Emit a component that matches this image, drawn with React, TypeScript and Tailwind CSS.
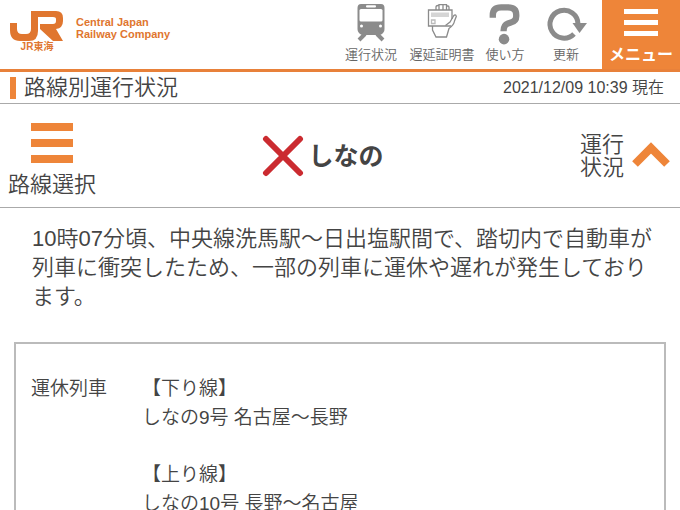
import { useState } from 'react'

const NAV_LABEL = 'text-[13px] leading-5 whitespace-nowrap'

const cancelled = [
  { direction: '【下り線】', trains: ['しなの9号 名古屋〜長野'] },
  { direction: '【上り線】', trains: ['しなの10号 長野〜名古屋'] },
]

function Logo() {
  return (
    <a href="#top" className="flex gap-3 pt-[11px] pl-[10px] text-[#e0762f]">
      <div className="flex flex-col items-center">
        <svg width="54" height="30" viewBox="0 0 54 30" fill="currentColor" aria-hidden="true">
          <path d="M0 12H7V18Q7 23 12 23H16Q21 23 21 18V0H46Q53 0 53 7V10Q53 17 46 18L53 30H43L30 18V13H43Q46 13 46 10V8Q46 6 43 6H28V20Q28 30 19 30H10Q0 30 0 19Z" />
        </svg>
        <span className="text-[10px] leading-3 font-bold">JR東海</span>
      </div>
      <div className="pt-[5px] text-[11px] leading-3 font-bold whitespace-nowrap">
        Central Japan
        <br />
        Railway Company
      </div>
    </a>
  )
}

function TrainIcon() {
  return (
    <svg width="30" height="38" viewBox="0 0 30 38" aria-hidden="true">
      <path fill="#8b8b8b" d="M5 0H25Q28.5 0 28.5 4V25Q28.5 29 24 31H6Q1.5 29 1.5 25V4Q1.5 0 5 0Z" />
      <path d="M9 30L3 36M21 30L27 36" stroke="#8b8b8b" strokeWidth="4" />
      <rect x="10" y="1.3" width="10" height="2.2" rx="1" fill="#fff" />
      <rect x="3.5" y="5" width="23" height="12.5" rx="1.5" fill="#fff" />
      <circle cx="5.5" cy="22" r="1.5" fill="#fff" />
      <circle cx="24.5" cy="22" r="1.5" fill="#fff" />
    </svg>
  )
}

function CertificateIcon() {
  return (
    <svg width="30" height="38" viewBox="0 0 30 38" fill="none" stroke="#8b8b8b" strokeWidth="1.3" aria-hidden="true">
      <path d="M9 6V3Q9 1.5 11 1.5H12V6M12 1.5V.7H16V6M16 .7H19.5V6M19.5 2H21Q22 2 22 3.5V6" />
      <path d="M24 22H1.5V6H25V15" />
      <path d="M4 8.5H22V13H4Z" fill="#d5d5d5" stroke="none" />
      <path d="M4.5 16H8V19.5H4.5Z" stroke="#bbb" />
      <path d="M5.5 22V26L9 33H19.5L22 24.5Q27 21 27.5 17L29.3 12.5Q28.5 9.5 26.5 12L23 18L18.5 21.5" />
    </svg>
  )
}

function QuestionIcon() {
  return (
    <svg width="32" height="42" viewBox="0 0 32 42" aria-hidden="true">
      <path
        d="M3.5 14V11.5Q3.5 3.5 12 3.5H19Q27.5 3.5 27.5 11V12.5Q27.5 17.5 22 19L19 20Q14.5 21.5 14.5 28"
        fill="none"
        stroke="#8b8b8b"
        strokeWidth="6.5"
      />
      <circle cx="15" cy="36" r="5.4" fill="#8b8b8b" />
    </svg>
  )
}

function ReloadIcon() {
  return (
    <svg width="42" height="38" viewBox="0 0 42 38" aria-hidden="true">
      <path d="M29 30A14 14 0 1 1 33 20" fill="none" stroke="#8b8b8b" strokeWidth="5" />
      <path d="M27.5 19H42L34.5 29Z" fill="#8b8b8b" />
    </svg>
  )
}

export default function App() {
  const [open, setOpen] = useState(true)

  return (
    <div
      id="top"
      lang="ja"
      className="min-h-screen bg-white font-['Liberation_Sans','Noto_Sans_CJK_JP',sans-serif] font-[350] text-[#444]"
    >
      <header className="flex h-[72px] justify-between border-b-3 border-[#e8813a]">
        <Logo />
        <nav className="flex text-[#666]">
          <a href="#status" className="flex w-[66px] flex-col items-center justify-between py-1">
            <TrainIcon />
            <span className={NAV_LABEL}>運行状況</span>
          </a>
          <a href="#certificate" className="flex w-[76px] flex-col items-center justify-between py-1">
            <CertificateIcon />
            <span className={NAV_LABEL}>遅延証明書</span>
          </a>
          <a href="#help" className="flex w-[50px] flex-col items-center justify-between py-1">
            <QuestionIcon />
            <span className={NAV_LABEL}>使い方</span>
          </a>
          <button type="button" className="flex w-[72px] flex-col items-center justify-between py-1">
            <ReloadIcon />
            <span className={NAV_LABEL}>更新</span>
          </button>
          <button
            type="button"
            className="flex w-[78px] flex-col items-center justify-between bg-[#ee8539] pt-[9px] pb-[2px] text-white"
          >
            <span className="flex flex-col gap-[6px]">
              <span className="h-[5px] w-[34px] bg-white" />
              <span className="h-[5px] w-[34px] bg-white" />
              <span className="h-[5px] w-[34px] bg-white" />
            </span>
            <span className="text-base leading-6 font-bold">メニュー</span>
          </button>
        </nav>
      </header>

      <div className="flex h-8 items-center justify-between border-b border-[#aaa] pr-4 pl-[10px]">
        <h1 className="flex items-center gap-2 text-[22px] leading-7">
          <span className="h-[22px] w-[6px] bg-[#ee8539]" />
          路線別運行状況
        </h1>
        <time dateTime="2021-12-09T10:39" className="text-base">
          2021/12/09 10:39 現在
        </time>
      </div>

      <section className="grid h-[104px] grid-cols-[1fr_auto_1fr] items-center border-b border-[#aaa] pr-[10px] pl-2">
        <button type="button" className="flex flex-col items-center gap-2 justify-self-start pt-[10px] text-[22px] leading-7">
          <span className="flex flex-col gap-2">
            <span className="h-2 w-[42px] bg-[#ee8539]" />
            <span className="h-2 w-[42px] bg-[#ee8539]" />
            <span className="h-2 w-[42px] bg-[#ee8539]" />
          </span>
          路線選択
        </button>
        <h2 className="mr-8 flex items-center gap-1 text-[25px] leading-9 font-bold">
          <svg width="42" height="42" viewBox="0 0 42 42" aria-hidden="true">
            <path d="M4 4L38 38M38 4L4 38" stroke="#cb2b30" strokeWidth="6" strokeLinecap="round" />
          </svg>
          しなの
        </h2>
        <button
          type="button"
          aria-expanded={open}
          onClick={() => setOpen(!open)}
          className="flex items-center gap-2 justify-self-end text-[22px] leading-[23px]"
        >
          <span>
            運行
            <br />
            状況
          </span>
          <svg width="38" height="28" viewBox="0 0 38 28" className={open ? '' : 'rotate-180'} aria-hidden="true">
            <path d="M3 22L19 6L35 22" fill="none" stroke="#ee8539" strokeWidth="8" />
          </svg>
        </button>
      </section>

      {open && (
        <main className="px-[14px] pt-4">
          <p className="pr-1 pl-[18px] text-[22px] leading-[29px]">
            10時07分頃、中央線洗馬駅〜日出塩駅間で、踏切内で自動車が列車に衝突したため、一部の列車に運休や遅れが発生しております。
          </p>
          <dl className="mt-[31px] flex gap-[35px] border-2 border-[#bbb] px-[15px] py-[30px] text-[19px] leading-[29px]">
            <dt>運休列車</dt>
            <dd className="flex flex-col gap-7">
              {cancelled.map((group) => (
                <div key={group.direction}>
                  <p>{group.direction}</p>
                  {group.trains.map((train) => (
                    <p key={train}>{train}</p>
                  ))}
                </div>
              ))}
            </dd>
          </dl>
        </main>
      )}
    </div>
  )
}
